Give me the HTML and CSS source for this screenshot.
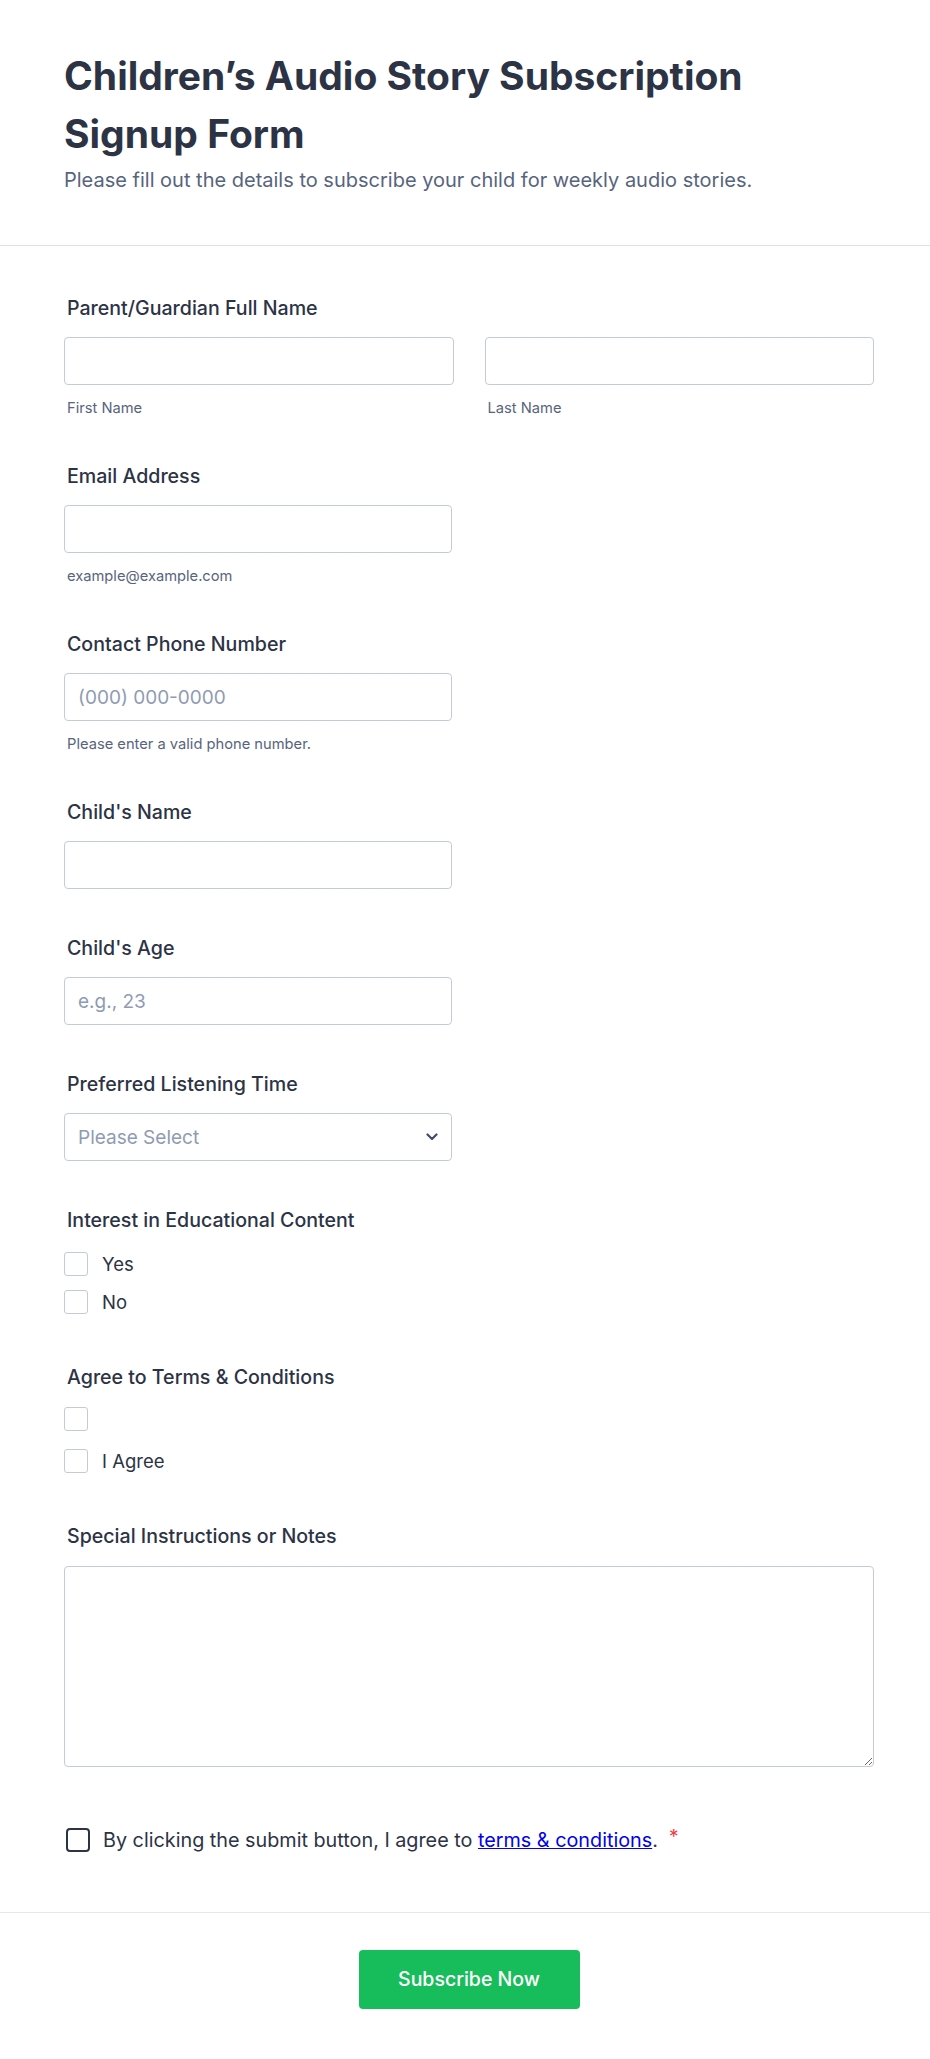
FILE: index.html
```html
<!DOCTYPE html>
<html lang="en">
<head>
<meta charset="utf-8">
<title>Children’s Audio Story Subscription Signup Form</title>
<link rel="stylesheet" href="styles.css">
</head>
<body>
<div class="page">
  <header class="form-header">
    <h1 class="form-title">Children’s Audio Story Subscription Signup Form</h1>
    <p class="form-subtitle">Please fill out the details to subscribe your child for weekly audio stories.</p>
  </header>

  <form class="form-body">
    <div class="field">
      <label class="field-label">Parent/Guardian Full Name</label>
      <div class="name-row">
        <div class="name-col">
          <input class="text-input" type="text">
          <span class="sublabel">First Name</span>
        </div>
        <div class="name-col">
          <input class="text-input" type="text">
          <span class="sublabel">Last Name</span>
        </div>
      </div>
    </div>

    <div class="field">
      <label class="field-label">Email Address</label>
      <div class="half">
        <input class="text-input" type="email">
        <span class="sublabel">example@example.com</span>
      </div>
    </div>

    <div class="field">
      <label class="field-label">Contact Phone Number</label>
      <div class="half">
        <input class="text-input" type="tel" placeholder="(000) 000-0000">
        <span class="sublabel">Please enter a valid phone number.</span>
      </div>
    </div>

    <div class="field">
      <label class="field-label">Child's Name</label>
      <div class="half">
        <input class="text-input" type="text">
      </div>
    </div>

    <div class="field">
      <label class="field-label">Child's Age</label>
      <div class="half">
        <input class="text-input" type="text" placeholder="e.g., 23">
      </div>
    </div>

    <div class="field">
      <label class="field-label">Preferred Listening Time</label>
      <div class="half select-wrap">
        <select class="select-input">
          <option>Please Select</option>
        </select>
        <svg class="select-chevron" width="12" height="8" viewBox="0 0 12 8" aria-hidden="true">
          <path d="M1.5 1.5 L6 6 L10.5 1.5" fill="none" stroke="#414c66" stroke-width="2.2" stroke-linecap="round" stroke-linejoin="round"/>
        </svg>
      </div>
    </div>

    <div class="field field-choices">
      <label class="field-label">Interest in Educational Content</label>
      <div class="choices">
        <label class="choice"><input class="choice-box" type="checkbox"><span>Yes</span></label>
        <label class="choice"><input class="choice-box" type="checkbox"><span>No</span></label>
      </div>
    </div>

    <div class="field field-choices">
      <label class="field-label">Agree to Terms &amp; Conditions</label>
      <div class="choices">
        <label class="choice choice-empty"><input class="choice-box" type="checkbox"></label>
        <label class="choice"><input class="choice-box" type="checkbox"><span>I Agree</span></label>
      </div>
    </div>

    <div class="field">
      <label class="field-label">Special Instructions or Notes</label>
      <textarea class="textarea-input"></textarea>
    </div>

    <div class="terms-row">
      <input class="terms-box" type="checkbox">
      <span class="terms-text">By clicking the submit button, I agree to <a href="#" class="terms-link">terms &amp; conditions</a>.</span>
      <span class="required">*</span>
    </div>
  </form>

  <div class="form-footer">
    <button class="submit-btn" type="button">Subscribe Now</button>
  </div>
</div>
</body>
</html>
```

FILE: styles.css
```css
* {
  box-sizing: border-box;
}

html, body {
  margin: 0;
  padding: 0;
  background: #ffffff;
}

body {
  font-family: Inter, "Noto Sans", "Liberation Sans", sans-serif;
  color: #2c3345;
}

.page {
  width: 930px;
}

.form-header {
  padding: 47px 56px 51px 64px;
  border-bottom: 1px solid #dfe1e8;
}

.form-title {
  margin: 0;
  font-size: 39px;
  line-height: 58px;
  font-weight: 700;
  color: #2c3345;
  max-width: 720px;
}

.form-subtitle {
  margin: 3px 0 0;
  font-size: 20px;
  line-height: 28px;
  color: #57647e;
}

.form-body {
  padding: 50px 56px 0 64px;
  display: flex;
  flex-direction: column;
}

.field {
  display: flex;
  flex-direction: column;
  margin-bottom: 47px;
}

.field-choices {
  margin-bottom: 49px;
}

.field-label {
  display: block;
  font-size: 19.6px;
  line-height: 24px;
  font-weight: 500;
  color: #2c3345;
  margin: 0 0 17px 3px;
}

.name-row {
  display: grid;
  grid-template-columns: 1fr 1fr;
  column-gap: 31px;
}

.name-col,
.half {
  display: flex;
  flex-direction: column;
}

.half {
  width: 388px;
}

.text-input,
.select-input,
.textarea-input {
  width: 100%;
  height: 48px;
  border: 1px solid #c3cad8;
  border-radius: 4px;
  background: #ffffff;
  padding: 0 13px;
  font-family: inherit;
  font-size: 19px;
  color: #2c3345;
  outline: none;
}

.text-input::placeholder {
  color: #8f9bb3;
}

.sublabel {
  display: block;
  margin: 14px 0 0 3px;
  font-size: 14.7px;
  line-height: 18px;
  color: #57647e;
}

.select-wrap {
  position: relative;
}

.select-input {
  appearance: none;
  -webkit-appearance: none;
  color: #8f9bb3;
}

.select-chevron {
  position: absolute;
  right: 14px;
  top: 20px;
  pointer-events: none;
}

.choices {
  display: flex;
  flex-direction: column;
  gap: 10px;
  margin-top: 1px;
}

.choice {
  display: flex;
  align-items: center;
  height: 28px;
  font-size: 18.5px;
  color: #2c3345;
}

.choice-empty {
  height: 30px;
  align-items: flex-start;
}

.choice-box {
  appearance: none;
  -webkit-appearance: none;
  width: 24px;
  height: 24px;
  margin: 0 14px 0 0;
  border: 1px solid #c3cad8;
  border-radius: 3px;
  background: #ffffff;
  flex: none;
}

.textarea-input {
  height: 201px;
  margin-top: 1px;
  padding: 10px 13px;
  resize: vertical;
  display: block;
}

.terms-row {
  display: flex;
  align-items: center;
  margin: 13.5px 0 60px 2px;
  font-size: 19.8px;
  line-height: 24px;
  color: #2c3345;
}

.terms-box {
  appearance: none;
  -webkit-appearance: none;
  width: 24px;
  height: 24px;
  margin: 0 13px 0 0;
  border: 2px solid #2c3345;
  border-radius: 4px;
  background: #ffffff;
  flex: none;
}

.terms-link {
  color: #0000ee;
  text-decoration: underline;
}

.required {
  color: #f23a3c;
  margin-left: 11px;
  font-size: 19px;
  align-self: flex-start;
  position: relative;
  top: -3px;
}

.form-footer {
  border-top: 1px solid #e3e8f2;
  padding: 37px 56px 49px 64px;
  display: flex;
  justify-content: center;
}

.submit-btn {
  width: 221px;
  height: 59px;
  background: #18bd5b;
  border: none;
  border-radius: 4px;
  color: #ffffff;
  font-family: inherit;
  font-size: 19.5px;
  font-weight: 500;
}
```
